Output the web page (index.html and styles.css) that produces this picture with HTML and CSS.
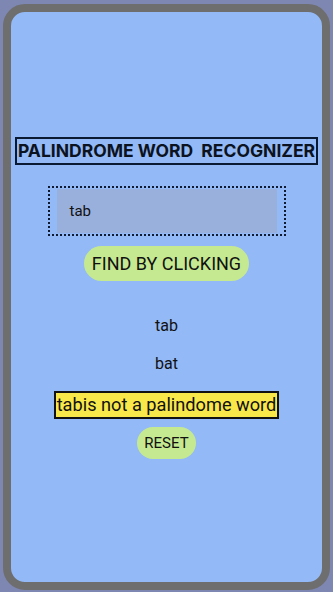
FILE: index.html
```html
<!DOCTYPE html>
<html>
<head>
<meta charset="utf-8">
<link rel="stylesheet" href="styles.css">
</head>
<body>
<div class="frame">
  <div class="card">
    <h1 class="title">PALINDROME WORD&nbsp; RECOGNIZER</h1>
    <div class="input-wrap">
      <div class="input">tab</div>
    </div>
    <button class="btn find">FIND BY CLICKING</button>
    <p class="word first">tab</p>
    <p class="word">bat</p>
    <div class="result">tabis not a palindome word</div>
    <button class="btn reset">RESET</button>
  </div>
</div>
</body>
</html>
```
FILE: styles.css
```css
html, body {
  margin: 0;
  padding: 0;
}
body {
  background: #7e87b2;
  font-family: Roboto, "Liberation Sans", sans-serif;
  color: #111;
  height: 592px;
  overflow: hidden;
}
.frame {
  margin: 4px 3px 0 3px;
  height: 586px;
  box-sizing: border-box;
  border: 8px solid #6e6e6f;
  border-radius: 22px;
  background: #93b9f6;
  overflow: hidden;
}
.card {
  display: flex;
  flex-direction: column;
  align-items: center;
  padding-top: 125px;
}
.title {
  margin: 0;
  font-family: Inter, Roboto, sans-serif;
  font-size: 17.5px;
  font-weight: 700;
  color: #0b1220;
  border: 2px solid #0b1a33;
  padding: 1px 1px;
  line-height: 22px;
  letter-spacing: 0;
  white-space: nowrap;
}
.input-wrap {
  margin-top: 21px;
  border: 2px dotted #101a30;
  padding: 1px 7px;
  width: 220px;
}
.input {
  background: #9ab0dc;
  height: 44px;
  line-height: 44px;
  padding-left: 13px;
  font-size: 15px;
  color: #111;
}
.btn {
  font-family: Roboto, "Liberation Sans", sans-serif;
  border: none;
  background: #c5e990;
  color: #111;
  border-radius: 18px;
  cursor: pointer;
}
.find {
  margin-top: 10px;
  font-size: 18px;
  height: 35px;
  padding: 0 8px;
}
.word {
  margin: 0;
  font-size: 16px;
  line-height: 20px;
}
.first {
  margin-top: 35px;
}
.word + .word {
  margin-top: 18px;
}
.result {
  margin-top: 17px;
  background: #f9e84a;
  border: 2px solid #111;
  font-size: 18.2px;
  line-height: 24px;
  padding: 0 1px;
  white-space: nowrap;
}
.reset {
  margin-top: 8px;
  font-size: 15px;
  height: 32px;
  padding: 0 7px;
  border-radius: 16px;
}
```
